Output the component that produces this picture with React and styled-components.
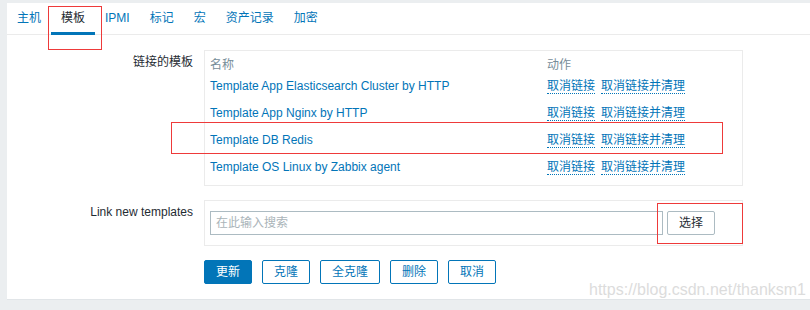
import React from "react";
import styled, { createGlobalStyle } from "styled-components";

const GlobalStyle = createGlobalStyle`
  html, body {
    margin: 0;
    padding: 0;
    background: #ebeef0;
  }
  body {
    font-family: "Liberation Sans", Arial, "Noto Sans CJK SC", sans-serif;
    font-size: 12px;
    color: #1f2c33;
  }
`;

const Page = styled.div`
  position: relative;
  width: 810px;
  height: 310px;
  overflow: hidden;
`;

const Panel = styled.div`
  margin: 3px 0 0 7px;
  padding-bottom: 15px;
  background: #ffffff;
  border-bottom: 1px solid #e1e5e8;
`;

const TabNav = styled.ul`
  display: flex;
  margin: 0;
  padding: 0;
  list-style: none;
  height: 31px;
  border-bottom: 1px solid #ebebeb;
`;

const Tab = styled.li`
  height: 32px;
  margin-bottom: -1px;
  box-sizing: border-box;
  padding: 8px 10px 0;
  line-height: 15px;
  color: ${(p) => (p.$active ? "#1f2c33" : "#0275b8")};
  border-bottom: 3px solid ${(p) => (p.$active ? "#0275b8" : "transparent")};
`;

const Form = styled.div`
  display: grid;
  grid-template-columns: 186px 539px;
  column-gap: 11px;
  row-gap: 14px;
  padding-top: 15px;
`;

const Label = styled.div`
  text-align: right;
  padding-top: 5px;
  line-height: 15px;
`;

const FieldBox = styled.div`
  border: 1px solid #ebebeb;
  padding: ${(p) => p.$pad || "5px 5px 4px"};
`;

const TableRow = styled.div`
  display: grid;
  grid-template-columns: 337px 1fr;
  align-items: center;
  height: ${(p) => (p.$head ? "17px" : "27px")};
  line-height: 15px;
`;

const HeadCell = styled.div`
  color: #768d99;
  padding-top: 1px;
`;

const NameLink = styled.span`
  color: #0275b8;
`;

const Actions = styled.div`
  display: flex;
  gap: 6px;
`;

const ActionLink = styled.span`
  color: #0275b8;
  border-bottom: 1px dotted #0275b8;
  line-height: 14px;
`;

const SearchRow = styled.div`
  display: flex;
  gap: 4px;
`;

const SearchInput = styled.div`
  box-sizing: border-box;
  width: 453px;
  height: 24px;
  border: 1px solid #acbbc2;
  padding: 0 5px;
  line-height: 22px;
  color: #aab4b9;
`;

const SelectButton = styled.div`
  box-sizing: border-box;
  height: 24px;
  padding: 0 11px;
  line-height: 22px;
  border: 1px solid #acbbc2;
  border-radius: 2px;
  background: #ffffff;
  color: #1f2c33;
`;

const Buttons = styled.div`
  grid-column: 2;
  display: flex;
  gap: 10px;
`;

const Button = styled.div`
  box-sizing: border-box;
  height: 24px;
  padding: 0 11px;
  line-height: 22px;
  border: 1px solid #0275b8;
  border-radius: 2px;
  background: ${(p) => (p.$primary ? "#0275b8" : "#ffffff")};
  color: ${(p) => (p.$primary ? "#ffffff" : "#0275b8")};
`;

const Marker = styled.div`
  position: absolute;
  border: 1px solid #ee3a3a;
  box-sizing: border-box;
`;

const Watermark = styled.div`
  position: absolute;
  left: 589px;
  top: 281px;
  font-size: 16px;
  line-height: 18px;
  color: #dcdcdc;
  text-shadow: 0 0 1px #ffffff;
`;

const tabs = ["主机", "模板", "IPMI", "标记", "宏", "资产记录", "加密"];

const templates = [
  "Template App Elasticsearch Cluster by HTTP",
  "Template App Nginx by HTTP",
  "Template DB Redis",
  "Template OS Linux by Zabbix agent",
];

const App = () => {
  return (
    <Page>
      <GlobalStyle />
      <Panel>
        <TabNav>
          {tabs.map((t) => (
            <Tab key={t} $active={t === "模板"}>
              {t}
            </Tab>
          ))}
        </TabNav>
        <Form>
          <Label>链接的模板</Label>
          <FieldBox>
            <TableRow $head>
              <HeadCell>名称</HeadCell>
              <HeadCell>动作</HeadCell>
            </TableRow>
            {templates.map((name) => (
              <TableRow key={name}>
                <NameLink>{name}</NameLink>
                <Actions>
                  <ActionLink>取消链接</ActionLink>
                  <ActionLink>取消链接并清理</ActionLink>
                </Actions>
              </TableRow>
            ))}
          </FieldBox>
          <Label>Link new templates</Label>
          <FieldBox $pad="10px 5px">
            <SearchRow>
              <SearchInput>在此输入搜索</SearchInput>
              <SelectButton>选择</SelectButton>
            </SearchRow>
          </FieldBox>
          <Buttons>
            <Button $primary>更新</Button>
            <Button>克隆</Button>
            <Button>全克隆</Button>
            <Button>删除</Button>
            <Button>取消</Button>
          </Buttons>
        </Form>
      </Panel>
      <Marker style={{ left: 48, top: 6, width: 54, height: 44 }} />
      <Marker style={{ left: 171, top: 122, width: 552, height: 32 }} />
      <Marker style={{ left: 657, top: 203, width: 86, height: 41 }} />
      <Watermark>https://blog.csdn.net/thanksm1</Watermark>
    </Page>
  );
};

export default App;
